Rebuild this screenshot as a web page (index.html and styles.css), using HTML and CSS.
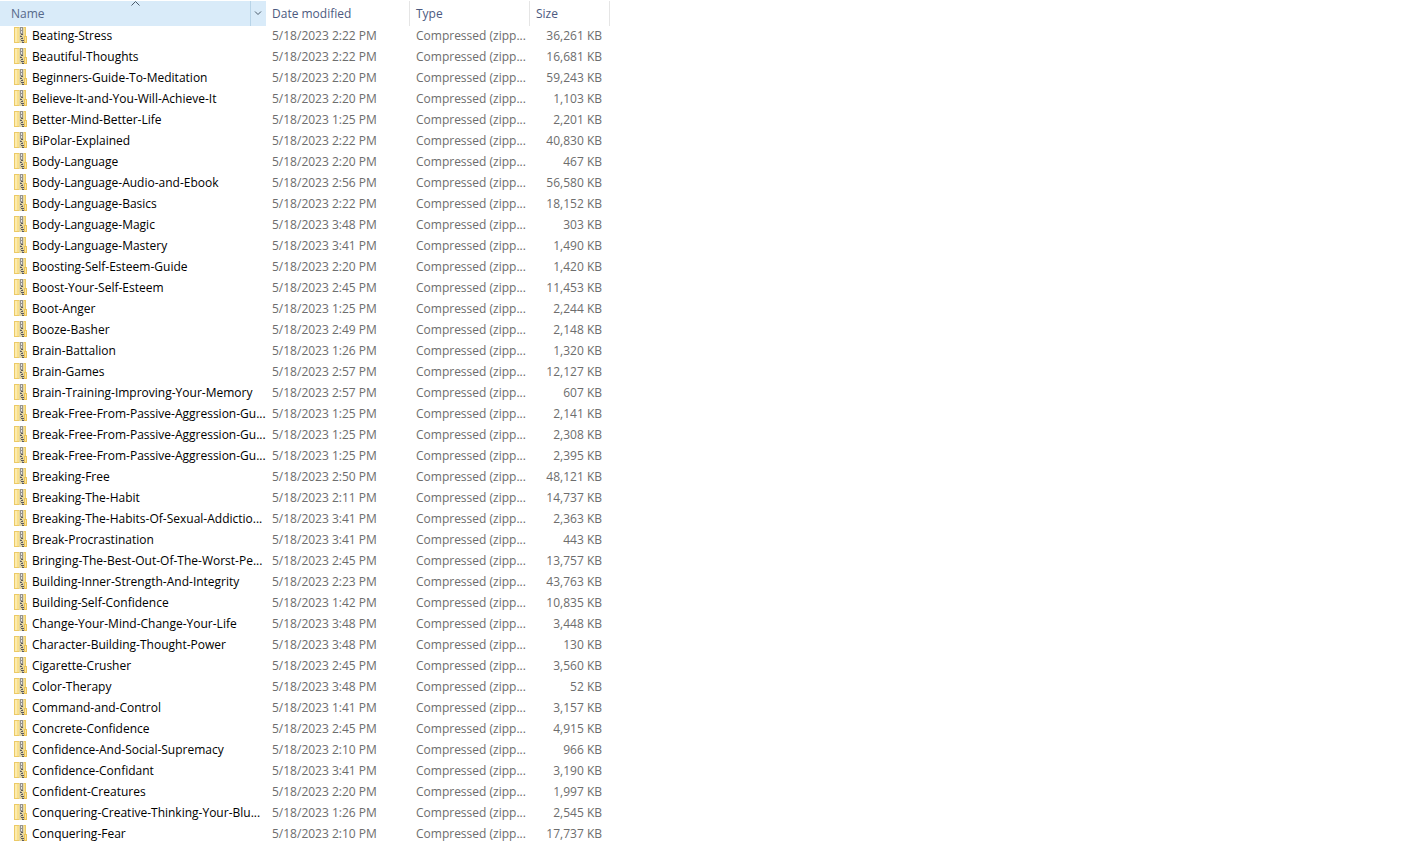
FILE: index.html
```
<!DOCTYPE html>
<html lang="en">
<head>
    <meta charset="UTF-8">
    <meta name="viewport" content="width=device-width, initial-scale=1.0">
    <title>Files</title>
    <link rel="stylesheet" href="styles.css">
</head>
<body>
    <svg class="sprite" aria-hidden="true">
        <symbol id="zip" viewBox="0 0 14 16">
            <path d="M0 0h12v9h1v7H0z" fill="#ecca66"/>
            <path d="M1 1h10v14H1z" fill="#f9e08c"/>
            <path d="M1 1h2v14H1z" fill="#fcebae"/>
            <path d="M10 9h3v7h-3z" fill="#ecc458"/>
            <path d="M11 10h1v5h-1z" fill="#fbe497"/>
            <path d="M5 0h5v16H5z" fill="#e4d6a0"/>
            <path d="M6 0h3v7H6z" fill="#96938c"/>
            <path d="M7 1h1v2H7zM7 4h1v2H7z" fill="#e6e6e6"/>
            <path d="M7 7h2v1H7zM6 9h2v1H6zM7 11h2v1H7zM7 13h3v1H7zM8 15h2v1H8z" fill="#5b5a5c"/>
            <path d="M6 8h1v1H6zM8 10h1v1H8zM6 12h1v1H6zM8 14h1v1H8z" fill="#a8a49a"/>
        </symbol>
    </svg>
    <table class="files">
        <colgroup>
            <col class="col-name">
            <col class="col-date">
            <col class="col-type">
            <col class="col-size">
        </colgroup>
        <thead>
            <tr>
                <th class="sorted" aria-sort="ascending">
                    <div class="head">
                        <button class="label">Name</button>
                        <button class="drop" aria-label="Filter by name">
                            <svg width="8" height="5" viewBox="0 0 8 5"><path d="M1 .5L4 3.500L7 .5"/></svg>
                        </button>
                    </div>
                    <svg class="arrow" width="9" height="5" viewBox="0 0 9 5"><path d="M.5 4.500L4.500 .5L8.500 4.500"/></svg>
                </th>
                <th><button class="label">Date modified</button></th>
                <th><button class="label">Type</button></th>
                <th><button class="label">Size</button></th>
            </tr>
        </thead>
        <tbody id="list"></tbody>
    </table>
    <script>
const files = [
    ["Beating-Stress", "2:22", "36,261"],
    ["Beautiful-Thoughts", "2:22", "16,681"],
    ["Beginners-Guide-To-Meditation", "2:20", "59,243"],
    ["Believe-It-and-You-Will-Achieve-It", "2:20", "1,103"],
    ["Better-Mind-Better-Life", "1:25", "2,201"],
    ["BiPolar-Explained", "2:22", "40,830"],
    ["Body-Language", "2:20", "467"],
    ["Body-Language-Audio-and-Ebook", "2:56", "56,580"],
    ["Body-Language-Basics", "2:22", "18,152"],
    ["Body-Language-Magic", "3:48", "303"],
    ["Body-Language-Mastery", "3:41", "1,490"],
    ["Boosting-Self-Esteem-Guide", "2:20", "1,420"],
    ["Boost-Your-Self-Esteem", "2:45", "11,453"],
    ["Boot-Anger", "1:25", "2,244"],
    ["Booze-Basher", "2:49", "2,148"],
    ["Brain-Battalion", "1:26", "1,320"],
    ["Brain-Games", "2:57", "12,127"],
    ["Brain-Training-Improving-Your-Memory", "2:57", "607"],
    ["Break-Free-From-Passive-Aggression-Gu...", "1:25", "2,141"],
    ["Break-Free-From-Passive-Aggression-Gu...", "1:25", "2,308"],
    ["Break-Free-From-Passive-Aggression-Gu...", "1:25", "2,395"],
    ["Breaking-Free", "2:50", "48,121"],
    ["Breaking-The-Habit", "2:11", "14,737"],
    ["Breaking-The-Habits-Of-Sexual-Addictio...", "3:41", "2,363"],
    ["Break-Procrastination", "3:41", "443"],
    ["Bringing-The-Best-Out-Of-The-Worst-Pe...", "2:45", "13,757"],
    ["Building-Inner-Strength-And-Integrity", "2:23", "43,763"],
    ["Building-Self-Confidence", "1:42", "10,835"],
    ["Change-Your-Mind-Change-Your-Life", "3:48", "3,448"],
    ["Character-Building-Thought-Power", "3:48", "130"],
    ["Cigarette-Crusher", "2:45", "3,560"],
    ["Color-Therapy", "3:48", "52"],
    ["Command-and-Control", "1:41", "3,157"],
    ["Concrete-Confidence", "2:45", "4,915"],
    ["Confidence-And-Social-Supremacy", "2:10", "966"],
    ["Confidence-Confidant", "3:41", "3,190"],
    ["Confident-Creatures", "2:20", "1,997"],
    ["Conquering-Creative-Thinking-Your-Blu...", "1:26", "2,545"],
    ["Conquering-Fear", "2:10", "17,737"]
];

document.querySelector("#list").innerHTML = files.map(([name, time, size]) => `
    <tr>
        <td class="name"><div class="file"><svg class="icon"><use href="#zip"/></svg><span>${name}</span></div></td>
        <td>5/18/2023 ${time} PM</td>
        <td>Compressed (zipp...</td>
        <td class="size">${size} KB</td>
    </tr>`).join("");
    </script>
</body>
</html>
```
FILE: styles.css
```
*{
    margin: 0;
    padding: 0;
    box-sizing: border-box;
}
body{
    background: #fff;
    color: #6d6d6d;
    font-family: "Segoe UI", "Open Sans", "Noto Sans", sans-serif;
    font-size: 12px;
    line-height: 20px;
    padding-top: 1px;
}
.sprite{
    display: none;
}
.files{
    table-layout: fixed;
    width: 610px;
    border-collapse: separate;
    border-spacing: 0;
}
.col-name{
    width: 266px;
}
.col-date{
    width: 144px;
}
.col-type{
    width: 120px;
}
.col-size{
    width: 80px;
}
th{
    position: relative;
    height: 25px;
    border-right: 1px solid #e5e5e5;
    font-weight: normal;
    text-align: left;
}
th.sorted{
    background: #d9ebf9;
    border-right: none;
}
button{
    border: none;
    background: none;
    color: #4c5a80;
    font: inherit;
    text-align: left;
}
.label{
    display: block;
    width: 100%;
    height: 25px;
    padding-left: 6px;
}
.head{
    display: flex;
}
.head .label{
    flex: 1;
    padding-left: 11px;
    color: #56698a;
}
.drop{
    display: flex;
    align-items: center;
    justify-content: center;
    width: 16px;
    padding-right: 2px;
    border-left: 1px solid #b8d4e8;
}
th svg{
    fill: none;
    stroke: #4a5a6a;
}
.arrow{
    position: absolute;
    top: 0;
    left: 131px;
}
td{
    height: 21px;
    padding-left: 6px;
    vertical-align: top;
    white-space: nowrap;
}
td.name{
    padding-left: 14px;
    color: #000;
}
.file{
    display: flex;
    align-items: flex-start;
    gap: 4px;
}
.icon{
    width: 14px;
    height: 16px;
    margin-top: 1px;
}
td.size{
    padding-right: 8px;
    text-align: right;
}
```
